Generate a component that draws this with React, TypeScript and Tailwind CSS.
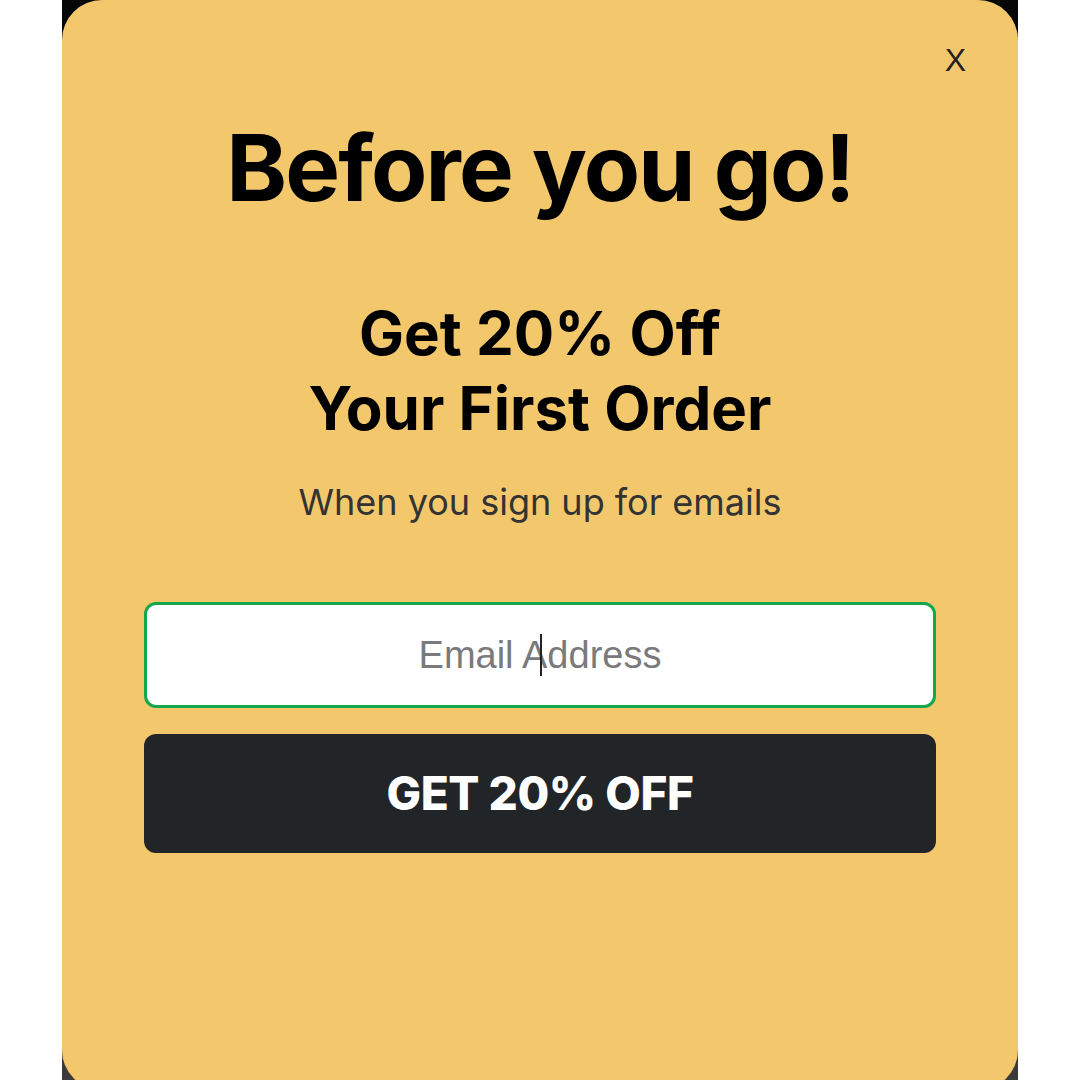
export default function App() {
  return (
    <div className="w-[1080px] h-[1080px] bg-white overflow-hidden">
      {/* dark backdrop behind the modal */}
      <div className="ml-[62px] w-[956px] h-full bg-gradient-to-b from-[#050707] via-[#1c1c1c] to-[#3b3b3b]">
        <div className="relative h-[1090px] rounded-[40px] bg-[#f3c86c] flex flex-col items-center px-[82px] font-['Inter',sans-serif] text-black">
          <button className="absolute top-[44px] right-[52px] text-[32px] leading-none text-[#222] font-['Liberation_Sans',Arial,sans-serif]">
            X
          </button>

          <h1 className="mt-[122px] text-[92px] leading-none font-bold tracking-[-0.02em]">
            Before you go!
          </h1>

          <h2 className="mt-[82px] text-[60px] leading-[75px] font-bold text-center">
            Get 20% Off
            <br />
            Your First Order
          </h2>

          <p className="mt-[34px] text-[36px] leading-[44px] text-[#333]">
            When you sign up for emails
          </p>

          <div className="relative mt-[78px] w-full">
            <input
              type="email"
              placeholder="Email Address"
              className="w-full h-[106px] rounded-[12px] border-[3px] border-[#13a84b] bg-white text-center text-[38px] font-['Liberation_Sans',Arial,sans-serif] placeholder:text-[#7a7a7a] outline-none"
            />
            <span className="absolute left-1/2 top-[32px] h-[42px] w-[2px] bg-[#222]" />
          </div>

          <button className="mt-[26px] w-full h-[119px] rounded-[12px] bg-[#212527] text-white text-[46px] font-extrabold tracking-[-0.01em]">
            GET 20% OFF
          </button>
        </div>
      </div>
    </div>
  );
}
